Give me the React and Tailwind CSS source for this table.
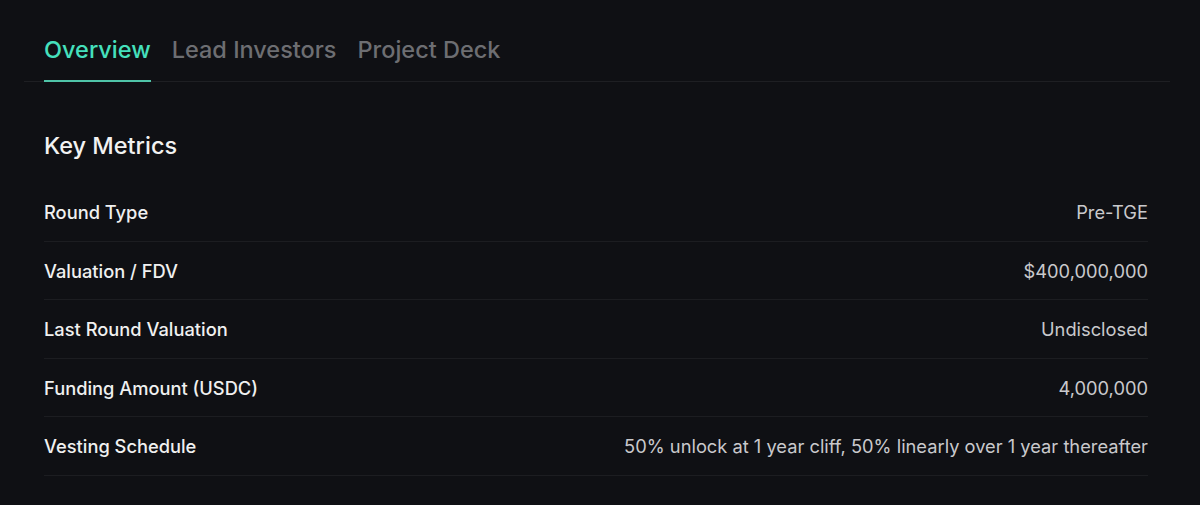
import React, { useState } from "react";

const metrics = [
  { label: "Round Type", value: "Pre-TGE" },
  { label: "Valuation / FDV", value: "$400,000,000" },
  { label: "Last Round Valuation", value: "Undisclosed" },
  { label: "Funding Amount (USDC)", value: "4,000,000" },
  {
    label: "Vesting Schedule",
    value: "50% unlock at 1 year cliff, 50% linearly over 1 year thereafter",
  },
];

const tabs = ["Overview", "Lead Investors", "Project Deck"];

export default function App() {
  const [active, setActive] = useState("Overview");
  return (
    <div
      className="min-h-screen bg-[#0f1014] px-6 pt-[30px]"
      style={{ fontFamily: "Inter, 'Liberation Sans', sans-serif" }}
    >
      <div className="w-[1146px]">
        <div className="flex gap-[21px] border-b border-[#1e1f23] px-5">
          {tabs.map((t) => (
            <button
              key={t}
              onClick={() => setActive(t)}
              className={`pb-[10px] text-[23.5px] font-medium leading-[40px] border-b-2 -mb-px ${
                active === t
                  ? "text-[#45e0bd] border-[#4fc4a8]"
                  : "text-[#6d6e72] border-transparent"
              }`}
            >
              {t}
            </button>
          ))}
        </div>
        <div className="pl-5 pr-[22px] pt-[46px]">
          <h2 className="text-[23.5px] font-medium text-[#f2f2f2] leading-[36px] mb-[19px]">
            Key Metrics
          </h2>
          {metrics.map((m) => (
            <div
              key={m.label}
              className="flex items-center justify-between h-[58.5px] pt-[2px] border-b border-[#1c1d21] text-[18.3px]"
            >
              <span className="font-medium text-[#f0f0f0]">{m.label}</span>
              <span className="text-[#c9c9cc]">{m.value}</span>
            </div>
          ))}
        </div>
      </div>
    </div>
  );
}
